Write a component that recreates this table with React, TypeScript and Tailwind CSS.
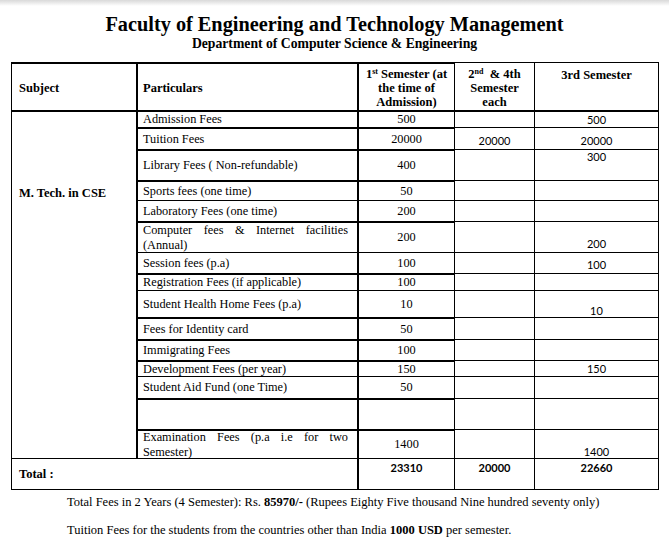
const serif = "font-['Liberation_Serif',serif]";
const sans = "font-['Lato',sans-serif]";

type Row = {
  label: string;
  first: string;
  second?: string;
  third?: string;
  thick: boolean;
  thirdAlign?: string;
  twoLine?: boolean;
};

const rows: Row[] = [
  { label: 'Admission Fees', first: '500', third: '500', thick: true },
  { label: 'Tuition Fees', first: '20000', second: '20000', third: '20000', thick: true, thirdAlign: 'items-center pt-[3px]' },
  { label: 'Library Fees ( Non-refundable)', first: '400', third: '300', thick: true, thirdAlign: 'items-start' },
  { label: 'Sports fees (one time)', first: '50', thick: true },
  { label: 'Laboratory Fees (one time)', first: '200', thick: false },
  { label: 'Computer fees & Internet facilities (Annual)', first: '200', third: '200', thick: true, twoLine: true, thirdAlign: 'items-end pb-[2px]' },
  { label: 'Session fees (p.a)', first: '100', third: '100', thick: false, thirdAlign: 'items-center pt-[2px]' },
  { label: 'Registration Fees (if applicable)', first: '100', thick: true },
  { label: 'Student Health Home Fees (p.a)', first: '10', third: '10', thick: false, thirdAlign: 'items-end' },
  { label: 'Fees for Identity card', first: '50', thick: true },
  { label: 'Immigrating Fees', first: '100', thick: true },
  { label: 'Development Fees (per year)', first: '150', third: '150', thick: true },
  { label: 'Student Aid Fund (one Time)', first: '50', thick: false },
  { label: '', first: '', thick: true },
  { label: 'Examination Fees (p.a i.e for two Semester)', first: '1400', third: '1400', thick: true, twoLine: true, thirdAlign: 'items-end' },
];

export default function App() {
  return (
    <div className={`w-[669px] h-[544px] bg-white text-black ${serif} overflow-hidden`}>
      {/* page edge shadow */}
      <div className="h-[6px] bg-gradient-to-b from-[#d9d9d9] to-white" />

      <div className="text-center">
        <h1 className="mt-[6px] text-[20.3px] leading-[24px] font-bold">
          Faculty of Engineering and Technology Management
        </h1>
        <p className="text-[13.7px] leading-[16px] font-bold">
          Department of Computer Science &amp; Engineering
        </p>
      </div>

      {/* fee table */}
      <div className="ml-[11px] mt-[10px] w-[648px] grid grid-cols-[125px_221px_97px_80px_124px] grid-rows-[48px_17px_22px_31px_20px_21px_31px_21px_17px_27px_22px_21px_16px_22px_31px_29px_31px] border-r border-b border-black text-[12.3px] leading-[15px]">
        {/* header */}
        <div className="border-t-2 border-l border-black flex items-center pt-[2px] pl-[7px] font-bold text-[12.5px]">Subject</div>
        <div className="border-t-2 border-l-2 border-black flex items-center pt-[2px] pl-[5px] font-bold text-[12.5px]">Particulars</div>
        <div className="border-t-2 border-l-2 border-black flex flex-col justify-center items-center pt-[2px] font-bold text-[12.5px] leading-[14px] text-center">
          <span>
            1<sup className="text-[8px]">st</sup> Semester (at
          </span>
          <span>the time of</span>
          <span>Admission)</span>
        </div>
        <div className="border-t border-l border-black flex flex-col justify-center items-center pt-[2px] font-bold text-[12.5px] leading-[14px] text-center">
          <span>
            2<sup className="text-[8px]">nd</sup>&nbsp; &amp; 4th
          </span>
          <span>Semester</span>
          <span>each</span>
        </div>
        <div className="border-t border-l border-black flex justify-center pt-[5px] font-bold text-[12.5px] leading-[14px]">
          3rd Semester
        </div>

        {/* subject cell */}
        <div className="row-span-15 border-t-2 border-l border-black pl-[7px] pt-[74px] font-bold text-[12.5px]">
          M. Tech. in CSE
        </div>

        {rows.map((r, i) => {
          const top = i === 0 ? 'border-t-2' : r.thick ? 'border-t-2' : 'border-t';
          const thinTop = i === 0 ? 'border-t-2' : 'border-t';
          return [
            <div key={`p${i}`} className={`${top} border-l-2 border-black flex items-center pl-[5px] pr-[9px]`}>
              {r.twoLine ? (
                <span className="text-justify leading-[15px] w-full">{r.label}</span>
              ) : (
                <span className="whitespace-nowrap">{r.label}</span>
              )}
            </div>,
            <div key={`a${i}`} className={`${top} border-l-2 border-black flex items-center justify-center`}>
              {r.first}
            </div>,
            <div key={`b${i}`} className={`${thinTop} border-l border-black flex items-center justify-center pt-[3px] ${sans} text-[11px] leading-[13px]`}>
              {r.second}
            </div>,
            <div key={`c${i}`} className={`${thinTop} border-l border-black flex justify-center ${r.thirdAlign ?? 'items-center'} ${sans} text-[11px] leading-[13px]`}>
              {r.third}
            </div>,
          ];
        })}

        {/* total */}
        <div className="col-span-2 border-t border-l border-black flex items-center pl-[7px] font-bold text-[12.5px]">Total :</div>
        <div className={`border-t border-l-2 border-black flex justify-center pt-[2px] ${sans} font-bold text-[11px] leading-[13px]`}>23310</div>
        <div className={`border-t border-l border-black flex justify-center pt-[2px] ${sans} font-bold text-[11px] leading-[13px]`}>20000</div>
        <div className={`border-t border-l border-black flex justify-center pt-[2px] ${sans} font-bold text-[11px] leading-[13px]`}>22660</div>
      </div>

      <div className="pl-[67px] text-[12.5px] leading-[15px]">
        <p className="mt-[5px]">
          Total Fees in 2 Years (4 Semester): Rs. <b>85970/-</b> (Rupees Eighty Five thousand Nine hundred seventy only)
        </p>
        <p className="mt-[13px]">
          Tuition Fees for the students from the countries other than India <b>1000 USD</b> per semester.
        </p>
      </div>
    </div>
  );
}
